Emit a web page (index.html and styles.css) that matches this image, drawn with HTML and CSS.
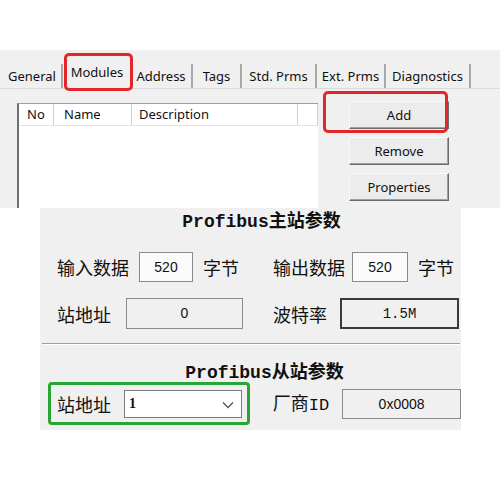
FILE: index.html
```html
<!DOCTYPE html>
<html lang="zh-CN">
<head>
    <meta charset="UTF-8">
    <title>Profibus Modules</title>
    <link rel="stylesheet" href="styles.css">
</head>
<body>
    <div class="dialog">
        <div class="tabs">
            <div class="tab tab-general">General</div>
            <div class="tab tab-modules active">Modules</div>
            <div class="tab tab-address">Address</div>
            <div class="tab tab-tags">Tags</div>
            <div class="tab tab-std">Std. Prms</div>
            <div class="tab tab-ext">Ext. Prms</div>
            <div class="tab tab-diag">Diagnostics</div>
        </div>
        <div class="page">
            <div class="list">
                <div class="list-head">
                    <div class="col col-no">No</div>
                    <div class="col col-name">Name</div>
                    <div class="col col-desc">Description</div>
                    <div class="col col-end"></div>
                </div>
            </div>
            <div class="buttons">
                <div class="mark-red"></div>
                <button class="win-btn add-btn">Add</button>
                <button class="win-btn">Remove</button>
                <button class="win-btn">Properties</button>
            </div>
        </div>
    </div>

    <div class="params">
        <div class="title">Profibus<span class="cjk">主站参数</span></div>
        <div class="row row-1">
            <div class="half">
                <span class="lbl">输入数据</span>
                <span class="box box-in">520</span>
                <span class="lbl unit">字节</span>
            </div>
            <div class="half">
                <span class="lbl">输出数据</span>
                <span class="box box-out">520</span>
                <span class="lbl unit">字节</span>
            </div>
        </div>
        <div class="row row-2">
            <div class="half">
                <span class="lbl">站地址</span>
                <span class="box box-addr">0</span>
            </div>
            <div class="half">
                <span class="lbl">波特率</span>
                <span class="box box-baud mono">1.5M</span>
            </div>
        </div>
        <div class="sep"></div>
        <div class="title title-2">Profibus<span class="cjk">从站参数</span></div>
        <div class="row row-3">
            <div class="mark-green">
                <span class="lbl">站地址</span>
                <div class="combo">
                    <span class="combo-val">1</span>
                    <svg class="chev" width="12" height="8" viewBox="0 0 12 8">
                        <polyline points="1,1.5 6,6.5 11,1.5" fill="none" stroke="#555" stroke-width="1.3"/>
                    </svg>
                </div>
            </div>
            <span class="lbl vendor">厂商<span class="mono">ID</span></span>
            <span class="box box-id">0x0008</span>
        </div>
    </div>
</body>
</html>
```

FILE: styles.css
```css
body {
    margin: 0;
    background: #fff;
    font-family: "Noto Sans", "Liberation Sans", sans-serif;
    color: #111;
}

/* top: tabbed module dialog */
.dialog {
    margin-top: 50px;
    height: 158px;
    background: #f0f0f0;
    display: flex;
    flex-direction: column;
    overflow: hidden;
}
.tabs {
    display: flex;
    align-items: flex-end;
    height: 38px;
    padding-left: 3px;
    border-bottom: 1px solid #dadada;
}
.tab {
    position: relative;
    box-sizing: border-box;
    height: 24px;
    line-height: 24px;
    text-align: center;
    font-size: 13px;
    white-space: nowrap;
    border-right: 2px solid #a8a8a8;
}
.tab-general { width: 60px; }
.tab-modules { width: 68px; }
.tab-address { width: 62px; }
.tab-tags { width: 49px; }
.tab-std { width: 75px; }
.tab-ext { width: 69px; }
.tab-diag { width: 85px; }
.tab.active {
    height: 28px;
    line-height: 24px;
    border-right: none;
}
.tab.active::after {
    content: "";
    position: absolute;
    top: -7px;
    left: 1px;
    right: -2px;
    bottom: -3px;
    border: 3px solid #e3262b;
    border-radius: 5px;
}
.page {
    flex: 1;
    display: flex;
    padding: 14px 0 0 17px;
}
.list {
    width: 299px;
    background: #fff;
    border-left: 2px solid #6f6f6f;
    border-top: 1px solid #a0a0a0;
}
.list-head {
    display: flex;
    height: 21px;
    border-bottom: 1px solid #e3e3e3;
    font-size: 13px;
    line-height: 21px;
}
.col {
    border-right: 1px solid #d0d0d0;
    box-sizing: border-box;
}
.col-no { width: 35px; padding-left: 8px; }
.col-name { width: 78px; padding-left: 10px; }
.col-desc { width: 166px; padding-left: 7px; }
.col-end { width: 20px; }

.buttons {
    position: relative;
    margin: -2px 0 0 31px;
    display: flex;
    flex-direction: column;
    gap: 8px;
}
.win-btn {
    width: 100px;
    height: 28px;
    font-family: inherit;
    font-size: 13px;
    color: #111;
    background: #ececec;
    border: 1px solid;
    border-color: #fafafa #6a6a6a #6a6a6a #fafafa;
    box-shadow: inset -1px -1px 0 #a0a0a0;
    padding: 0;
}
.mark-red {
    position: absolute;
    left: -26px;
    top: -10px;
    width: 125px;
    height: 42px;
    box-sizing: border-box;
    border: 3px solid #e3262b;
    border-radius: 5px;
}

/* bottom: Profibus parameter panel */
.params {
    margin-left: 40px;
    width: 421px;
    height: 222px;
    background: #f0f0f0;
    font-family: "Noto Sans CJK SC", sans-serif;
}
.title {
    padding: 1px 0 0 22px;
    text-align: center;
    font-family: "Liberation Mono", monospace;
    font-weight: bold;
    font-size: 18px;
    line-height: 20px;
    height: 21px;
}
.title .cjk {
    font-family: "Noto Sans CJK SC", sans-serif;
    font-weight: bold;
}
.row {
    display: flex;
    align-items: center;
    white-space: nowrap;
}
.row-1 { margin-top: 22px; height: 30px; }
.row-2 { margin-top: 16px; height: 31px; }
.half {
    display: flex;
    align-items: center;
    width: 233px;
    padding-left: 17px;
    box-sizing: border-box;
}
.half + .half { padding-left: 0; width: auto; }
.lbl {
    font-size: 18px;
    line-height: 24px;
}
.unit { margin-left: 10px; }
.box {
    box-sizing: border-box;
    height: 30px;
    line-height: 28px;
    text-align: center;
    font-family: "Liberation Sans", sans-serif;
    font-size: 14px;
    border: 1px solid #8a8a8a;
    background: #f0f0f0;
}
.mono {
    font-family: "Liberation Mono", monospace;
}
.box-in { width: 54px; margin-left: 10px; background: #fbfbfb; }
.box-out { width: 56px; margin-left: 7px; background: #fbfbfb; }
.box-addr { width: 117px; margin-left: 15px; height: 31px; }
.box-baud {
    width: 119px;
    margin-left: 13px;
    height: 31px;
    border: 2px solid #3a3a3a;
    font-size: 14px;
}
.sep {
    margin: 14px 1px 0 2px;
    border-top: 1px solid #a0a0a0;
    border-bottom: 1px solid #fff;
}
.title-2 {
    margin-top: 14px;
    padding-left: 28px;
}
.row-3 {
    margin-top: 1px;
}
.mark-green {
    display: flex;
    align-items: center;
    margin-left: 8px;
    width: 202px;
    height: 43px;
    box-sizing: border-box;
    border: 3px solid #28a532;
    border-radius: 4px;
    padding-left: 6px;
}
.combo {
    position: relative;
    margin-left: 13px;
    width: 118px;
    height: 28px;
    box-sizing: border-box;
    background: #fff;
    border: 1px solid #7a7a7a;
    display: flex;
    align-items: center;
}
.combo-val {
    padding-left: 4px;
    font-family: "Liberation Serif", serif;
    font-weight: bold;
    font-size: 14px;
}
.chev {
    position: absolute;
    right: 7px;
    top: 10px;
}
.vendor { margin-left: 23px; }
.vendor .mono { font-size: 17px; }
.box-id { width: 119px; margin-left: 13px; }
```
